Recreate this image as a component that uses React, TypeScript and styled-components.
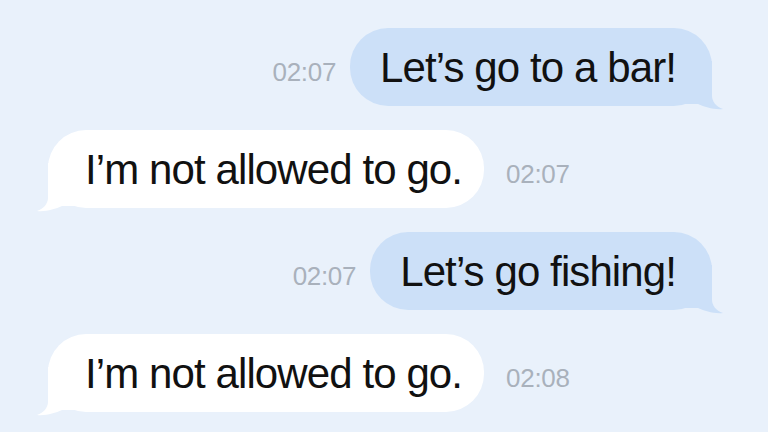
import React from "react";
import styled, { createGlobalStyle } from "styled-components";

type Message = {
  text: string;
  time: string;
  mine: boolean;
};

const messages: Message[] = [
  { text: "Let’s go to a bar!", time: "02:07", mine: true },
  { text: "I’m not allowed to go.", time: "02:07", mine: false },
  { text: "Let’s go fishing!", time: "02:07", mine: true },
  { text: "I’m not allowed to go.", time: "02:08", mine: false },
];

const GlobalStyle = createGlobalStyle`
  html, body {
    margin: 0;
    padding: 0;
    background: #e9f1fb;
  }
  body {
    font-family: "Liberation Sans", Arial, sans-serif;
  }
`;

const Tail: React.FC<{ mine: boolean; color: string }> = ({ mine, color }) => (
  <TailSvg $mine={mine} width="40" height="52" viewBox="0 0 40 52">
    <path
      d="M0 1 L28 1 L28 36 C28 41 32 47 39 49 C30 50 21 47 14 44 L0 44 Z"
      fill={color}
    />
  </TailSvg>
);

const App: React.FC = () => {
  return (
    <Screen>
      <GlobalStyle />
      {messages.map((m, i) => (
        <Row key={i} $mine={m.mine}>
          {m.mine && <Time>{m.time}</Time>}
          <Bubble $mine={m.mine}>
            <Tail mine={m.mine} color={m.mine ? "#cce0f8" : "#ffffff"} />
            <BubbleText>{m.text}</BubbleText>
          </Bubble>
          {!m.mine && <Time>{m.time}</Time>}
        </Row>
      ))}
    </Screen>
  );
};
export default App;

const Screen = styled.div`
  width: 768px;
  height: 432px;
  box-sizing: border-box;
  padding: 28px 56px 0 48px;
  display: flex;
  flex-direction: column;
  gap: 24px;
  overflow: hidden;
  background: #e9f1fb;
`;

const Row = styled.div<{ $mine: boolean }>`
  display: flex;
  align-items: center;
  justify-content: ${(p) => (p.$mine ? "flex-end" : "flex-start")};
  gap: ${(p) => (p.$mine ? "14px" : "22px")};
`;

const Bubble = styled.div<{ $mine: boolean }>`
  position: relative;
  height: 78px;
  display: flex;
  align-items: center;
  box-sizing: border-box;
  padding: ${(p) => (p.$mine ? "2px 36px 0 30px" : "2px 22px 0 37px")};
  border-radius: 38px;
  background: ${(p) => (p.$mine ? "#cce0f8" : "#ffffff")};
`;

const TailSvg = styled.svg<{ $mine: boolean }>`
  position: absolute;
  bottom: -6px;
  ${(p) => (p.$mine ? "right: -12px;" : "left: -12px; transform: scaleX(-1);")}
`;

const BubbleText = styled.span`
  position: relative;
  font-size: 42px;
  letter-spacing: -0.9px;
  color: #111111;
  white-space: nowrap;
`;

const Time = styled.span`
  margin-top: 11px;
  font-size: 26px;
  color: #a9b1bc;
  letter-spacing: -0.3px;
`;
